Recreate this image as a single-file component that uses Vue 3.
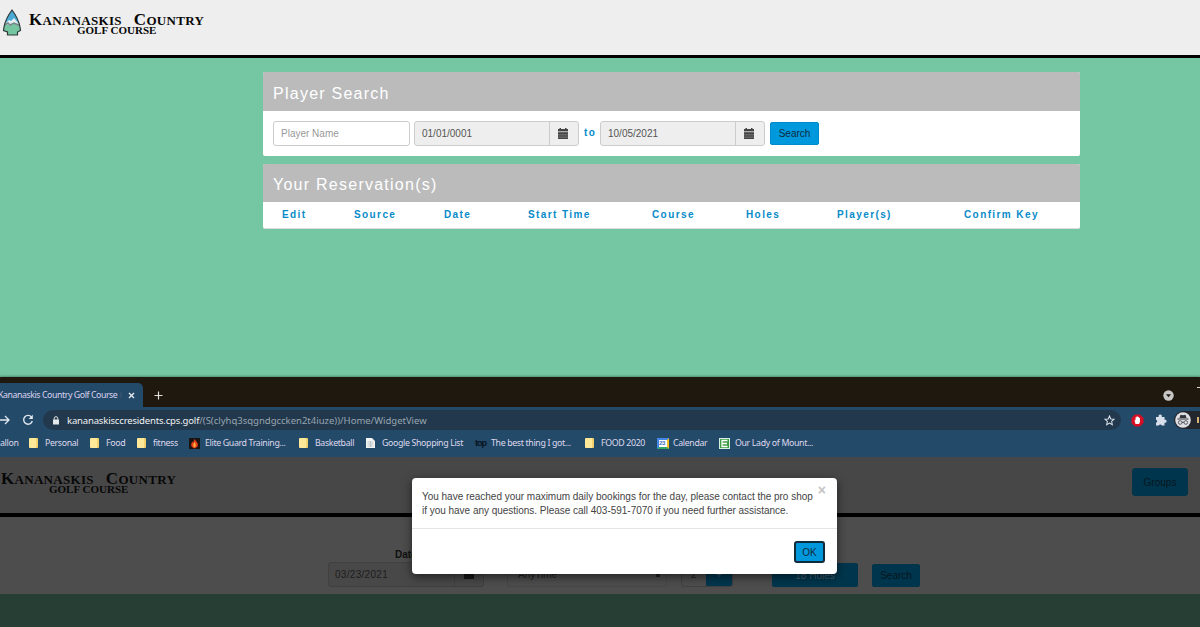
<template>
  <div class="screen">
    <section class="site">
      <header class="site-header">
        <svg class="arrowhead" width="20" height="28" viewBox="0 0 20 28">
          <path d="M10 1C13 5 16.500 10 18 18L18.500 21.500L15.500 23V26H5.500V23L1.500 21.500L2 18C3.500 10 7 5 10 1Z" fill="#74c5a0" />
          <path d="M10 1C7 5 4.500 9 3 15L7 12L9 13L12 10L17 15C15.500 9 13 5 10 1Z" fill="#49aad5" />
          <path d="M3 15L7 11L9 12L12 9L17 15L11 14L8 16Z" fill="#e5eff2" />
          <path d="M2.500 16L6 14L8 16L12 14L17.500 16.500" fill="none" stroke="#79878b" stroke-width="1.500" />
          <path d="M10 1C13 5 16.500 10 18 18L18.500 21.500L15.500 23V26H5.500V23L1.500 21.500L2 18C3.500 10 7 5 10 1Z" fill="none" stroke="#303a3b" stroke-width="1.200" />
        </svg>
        <div class="brand">
          <div class="brand-name"><b>K</b>ANANASKIS<b class="second">C</b>OUNTRY</div>
          <div class="brand-sub">GOLF COURSE</div>
        </div>
      </header>

      <main class="content">
        <div class="panel search-panel">
          <h2>Player Search</h2>
          <div class="panel-body">
            <input v-model="playerName" class="control" placeholder="Player Name" />
            <div v-for="(date, i) in dates" :key="date" class="date-wrap">
              <span v-if="i" class="to">to</span>
              <div class="date-group">
                <span class="date">{{ date }}</span>
                <span class="addon">
                  <svg width="10" height="11" viewBox="0 0 10 11">
                    <path d="M0 1H1.500V0H3V1H7V0H8.500V1H10V3H0Z" fill="#444" />
                    <path d="M0 3.500H10V11H0Z" fill="#666" />
                    <path d="M0 5.500H10M0 8H10M0 10.500H10" stroke="#444" />
                  </svg>
                </span>
              </div>
            </div>
            <button class="btn search-btn">Search</button>
          </div>
        </div>
        <div class="panel reservations">
          <h2>Your Reservation(s)</h2>
          <div class="table-head">
            <span v-for="col in columns" :key="col">{{ col }}</span>
          </div>
        </div>
      </main>
    </section>

    <section class="browser">
      <div class="tabs">
        <div class="tab">
          <span class="tab-title">Kananaskis Country Golf Course</span>
          <i class="tab-rest"></i>
          <svg width="7" height="7" viewBox="0 0 7 7"><path d="M1 1L6 6M6 1L1 6" stroke="#e8edf2" stroke-width="1.300" /></svg>
        </div>
        <svg class="new-tab" width="9" height="9" viewBox="0 0 9 9"><path d="M4.500 .5V8.500M.5 4.500H8.500" stroke="#e1dfdc" stroke-width="1.200" /></svg>
        <svg class="tab-search" width="11" height="11" viewBox="0 0 11 11"><circle cx="5.500" cy="5.500" r="5.200" fill="#c9c7c5" /><path d="M3 4.200H8L5.500 7.200Z" fill="#1f1910" /></svg>
        <i class="minimize"></i>
      </div>

      <div class="toolbar">
        <svg class="forward" width="10" height="10" viewBox="0 0 10 10"><path d="M0 5H9M5 1L9 5L5 9" fill="none" stroke="#dfe8ef" stroke-width="1.300" /></svg>
        <svg class="reload" width="12" height="12" viewBox="0 0 12 12"><path d="M9.500 3A4.400 4.400 0 1 0 10.300 7" fill="none" stroke="#dfe8ef" stroke-width="1.400" /><path d="M10.800 .8V5H6.600Z" fill="#dfe8ef" /></svg>
        <div class="address">
          <svg width="8" height="9" viewBox="0 0 8 9"><path d="M2.200 4V2.500A1.800 1.800 0 0 1 5.800 2.500V4" fill="none" stroke="#e4e8eb" stroke-width="1" /><rect x="1" y="3.500" width="6" height="5" rx=".6" fill="#e4e8eb" /></svg>
          <span class="host">kananaskisccresidents.cps.golf</span>
          <span class="path">/(S(clyhq3sqgndgccken2t4iuze))/Home/WidgetView</span>
          <svg class="star" width="11" height="11" viewBox="0 0 12 12"><path d="M6 1L7.400 4.300L11 4.600L8.300 7L9.100 10.600L6 8.700L2.900 10.600L3.700 7L1 4.600L4.600 4.300Z" fill="none" stroke="#dbe2e9" stroke-width="1.100" /></svg>
        </div>
        <svg class="adblock" width="13" height="13" viewBox="0 0 13 13"><path d="M4 .5H9L12.500 4V9L9 12.500H4L.5 9V4Z" fill="#d80f22" /><path d="M4.500 10L3.500 6.500L4.500 6V3.500Q5.200 3 5.500 3.500V2.500Q6.200 2 6.700 2.500V3Q7.500 2.500 8 3.300V4Q9 3.500 9 4.800V8L8 10Z" fill="#fff" /></svg>
        <svg class="puzzle" width="12" height="12" viewBox="0 0 12 12"><path d="M1 3H3.700A1.700 1.700 0 1 1 6.700 3H9.500V5.700A1.600 1.600 0 1 1 9.500 8.700V11.500H6.800A1.600 1.600 0 0 0 3.800 11.500H1V8.800A1.600 1.600 0 0 0 1 5.700Z" fill="#d9dfea" /></svg>
        <div class="incognito">
          <svg width="16" height="16" viewBox="0 0 16 16"><circle cx="8" cy="8" r="7.800" fill="#e0dfe3" /><path d="M4.500 6L5.500 2.800Q8 3.700 10.500 2.800L11.500 6Z" fill="#30343b" /><path d="M2.500 7H13.500M7 10.500Q8 9.500 9 10.500" fill="none" stroke="#30343b" /><circle cx="5.200" cy="10.500" r="1.800" fill="none" stroke="#555b64" /><circle cx="10.800" cy="10.500" r="1.800" fill="none" stroke="#555b64" /></svg>
          <i class="profile-text"></i>
        </div>
      </div>

      <nav class="bookmarks">
        <a v-for="mark in bookmarks" :key="mark.label">
          <span v-if="mark.icon" class="mark-icon" :class="mark.icon">
            <template v-if="mark.icon === 'top'">top</template>
            <template v-if="mark.icon === 'calendar'">23</template>
            <svg v-if="mark.icon === 'fire'" width="11" height="11" viewBox="0 0 11 11"><path d="M5.500 1Q7 3 8.500 5Q10 9 5.500 10.500Q1 9 2.500 5L4 3.500V5Z" fill="#e6401d" /><path d="M5.500 4Q8 8 5.500 9.500Q3 8 5.500 4Z" fill="#ffb338" /></svg>
            <svg v-if="mark.icon === 'sheet'" width="9" height="10" viewBox="0 0 9 10"><path d="M0 0H6L9 3V10H0Z" fill="#f4f4f2" /><path d="M1.500 4H7.500M1.500 6H7.500M1.500 8H7.500M4.500 3V9" stroke="#a5b0b7" stroke-width=".6" /></svg>
            <svg v-if="mark.icon === 'school'" width="11" height="11" viewBox="0 0 11 11"><rect width="11" height="11" fill="#d5efe0" /><rect x="1" y="1" width="9" height="9" fill="#3d9c42" /><path d="M8.500 2.500H3V8.500H8.500M3 5.500H8" fill="none" stroke="#fff" stroke-width="1.300" /></svg>
          </span>
          <span class="mark-label">{{ mark.label }}</span>
        </a>
      </nav>

      <div class="booking-page">
        <header class="booking-header">
          <div class="brand">
            <div class="brand-name"><b>K</b>ANANASKIS<b class="second">C</b>OUNTRY</div>
            <div class="brand-sub">GOLF COURSE</div>
          </div>
          <button class="dim-btn groups">Groups</button>
        </header>
        <div class="booking-form">
          <label class="date-field">
            <span class="field-label">Date</span>
            <span class="dim-control"><span>03/23/2021</span><i class="dim-addon"><b></b></i></span>
          </label>
          <span class="dim-control time">AnyTime<i class="caret"></i></span>
          <span class="dim-control players"><span>2</span><i class="stepper">+</i></span>
          <button class="dim-btn holes">18 Holes</button>
          <button class="dim-btn dim-search">Search</button>
        </div>

        <div v-if="modalOpen" class="modal">
          <div class="modal-body">
            <p>You have reached your maximum daily bookings for the day, please contact the pro shop<br />if you have any questions. Please call 403-591-7070 if you need further assistance.</p>
            <button class="close" @click="modalOpen = false">×</button>
          </div>
          <div class="modal-footer">
            <button class="btn ok" @click="modalOpen = false">OK</button>
          </div>
        </div>
      </div>
    </section>
  </div>
</template>

<script setup>
import { ref } from 'vue'

const playerName = ref('')
const modalOpen = ref(true)
const dates = ['01/01/0001', '10/05/2021']
const columns = ['Edit', 'Source', 'Date', 'Start Time', 'Course', 'Holes', 'Player(s)', 'Confirm Key']
const bookmarks = [
  { label: 'allon' },
  { label: 'Personal', icon: 'folder' },
  { label: 'Food', icon: 'folder' },
  { label: 'fitness', icon: 'folder' },
  { label: 'Elite Guard Training...', icon: 'fire' },
  { label: 'Basketball', icon: 'folder' },
  { label: 'Google Shopping List', icon: 'sheet' },
  { label: 'The best thing I got...', icon: 'top' },
  { label: 'FOOD 2020', icon: 'folder' },
  { label: 'Calendar', icon: 'calendar' },
  { label: 'Our Lady of Mount...', icon: 'school' }
]
</script>

<style>
body {
  margin: 0;
  overflow: hidden;
}
</style>

<style scoped>
* { box-sizing: border-box; }
svg { display: block; flex: none; }
button { font-family: inherit; padding: 0; }
.screen {
  width: 1200px;
  height: 627px;
  overflow: hidden;
  background: #74c7a2;
  font-family: "Liberation Sans", Arial, sans-serif;
  font-size: 10px;
}
.site { height: 377px; }
.site-header {
  height: 58px;
  display: flex;
  background: #eee;
  border-bottom: 3px solid #000;
  padding: 9px 0 0 3px;
}
.arrowhead { margin-left: -1px; }
.brand {
  width: 180px;
  font-family: "Liberation Serif", serif;
  font-weight: bold;
  color: #080808;
}
.site-header .brand { margin: 2px 0 0 7px; }
.brand-name {
  height: 14px;
  font-size: 13px;
  line-height: 17px;
  letter-spacing: 0.3px;
  white-space: nowrap;
}
.brand-name b { font-size: 17px; }
.brand-name .second { margin-left: 12px; }
.brand-sub {
  font-size: 11px;
  line-height: 10px;
  padding-left: 48px;
  white-space: nowrap;
}
.content {
  width: 817px;
  margin-left: 263px;
  padding-top: 14px;
}
.panel {
  background: #fff;
  border-radius: 2px;
  overflow: hidden;
}
.search-panel { height: 84px; margin-bottom: 8px; }
.reservations { height: 65px; border-bottom: 1px solid #ddd; }
.panel h2 {
  height: 38px;
  margin: 0;
  padding: 2px 10px 0;
  line-height: 38px;
  background: #bbb;
  color: #fff;
  font-size: 16px;
  font-weight: normal;
  letter-spacing: 1.25px;
}
.search-panel h2 { height: 39px; padding-top: 3px; }
.panel-body {
  display: flex;
  padding: 10px;
}
.control {
  width: 137px;
  height: 25px;
  margin-right: 4px;
  border: 1px solid #ccc;
  border-radius: 3px;
  padding: 0 7px;
  font: 10px "Liberation Sans", sans-serif;
}
.control::placeholder { color: #999; }
.date-wrap { display: flex; }
.date-group {
  width: 165px;
  height: 25px;
  display: flex;
  border: 1px solid #ccc;
  border-radius: 3px;
  background: #eee;
  line-height: 24px;
  color: #555;
}
.date { flex: 1; padding-left: 7px; }
.addon {
  width: 29px;
  border-left: 1px solid #ccc;
  padding: 6px 0 0 8px;
}
.to {
  width: 21px;
  padding-left: 5px;
  line-height: 24px;
  color: #088bca;
  font-weight: bold;
  letter-spacing: 1.3px;
}
.btn {
  background: #0098dc;
  border: 1px solid #008bca;
  border-radius: 2px;
  color: #102b3c;
  font-size: 10px;
}
.search-btn { width: 49px; height: 23px; margin: 1px 0 0 5px; }
.table-head {
  display: grid;
  grid-template-columns: 72px 90px 84px 124px 94px 91px 127px 1fr;
  padding-left: 19px;
  line-height: 26px;
  color: #088bc9;
  font-weight: bold;
  letter-spacing: 1.4px;
}

.browser {
  height: 250px;
  font-family: "Noto Sans", sans-serif;
}
.tabs {
  height: 30px;
  display: flex;
  align-items: center;
  padding-top: 6px;
  background: #1f180f;
  box-shadow: 0 -1px 2px rgba(0, 0, 0, 0.3);
}
.tab {
  width: 143px;
  height: 24px;
  display: flex;
  align-items: center;
  background: #244a6a;
  border-radius: 0 5px 0 0;
  color: #d9d1ed;
}
.tab-title {
  width: 119px;
  font-size: 8.8px;
  letter-spacing: -0.44px;
  margin-left: -2px;
  white-space: nowrap;
}
.tab-rest { width: 2px; height: 6px; margin: 0 6px 0 3px; background: #31506b; }
.new-tab { margin-left: 11px; }
.tab-search { margin-left: auto; }
.minimize { width: 3px; height: 1px; margin: -16px 0 0 23px; background: #ddd; }
.toolbar {
  height: 26px;
  display: flex;
  align-items: center;
  background: #244a6a;
}
.reload { margin-left: 12px; }
.address {
  width: 1080px;
  height: 20px;
  display: flex;
  align-items: center;
  margin-left: 9px;
  padding: 0 6px 0 9px;
  border-radius: 10px;
  background: #22384c;
  font-size: 9.5px;
}
.host { margin-left: 7px; color: #f1f2f3; white-space: nowrap; letter-spacing: -0.16px; }
.path { color: #98a5b0; white-space: nowrap; letter-spacing: 0; }
.star { margin-left: auto; }
.adblock { margin-left: 10px; }
.puzzle { margin-left: 11px; }
.incognito {
  width: 26px;
  height: 18px;
  display: flex;
  align-items: center;
  margin-left: 7px;
  padding-left: 1px;
  background: #23272d;
  border-radius: 9px 0 0 9px;
}
.profile-text { width: 2px; height: 6px; margin-left: 6px; background: #d4b478; }
.bookmarks {
  height: 24px;
  display: grid;
  grid-template-columns: 29px 61px 47px 52px 110px 67px 109px 110px 72px 62px 1fr;
  background: #244a6a;
  color: #dfd9ec;
  font-size: 8.8px;
  letter-spacing: -0.35px;
}
.bookmarks a { display: flex; align-items: center; height: 20px; white-space: nowrap; }
.mark-icon { width: 16px; flex: none; }
.folder::before {
  content: "";
  display: block;
  width: 9px;
  height: 10px;
  background: linear-gradient(90deg, #ffe898 75%, #f4d36f 75%);
  border-radius: 1px;
}
.fire svg { background: #191411; }
.top { font: bold 9px "Liberation Sans", sans-serif; color: #07131c; letter-spacing: -1px; }
.calendar {
  width: 12px;
  height: 11px;
  margin-right: 4px;
  border: 2px solid #4387e8;
  border-right-color: #f5bd25;
  border-bottom-color: #31a466;
  background: #fff;
  color: #3770c3;
  font: bold 6px/7px "Liberation Sans", sans-serif;
}

.booking-page {
  position: relative;
  height: 170px;
  background: #263e33;
  font-family: "Liberation Sans", Arial, sans-serif;
}
.booking-header {
  height: 60px;
  display: flex;
  justify-content: space-between;
  padding: 12px 12px 0 1px;
  background: #474747;
  border-top: 1px solid #44484c;
  border-bottom: 4px solid #000;
}
.dim-btn {
  height: 23px;
  border: 1px solid #00344b;
  border-radius: 2px;
  background: #00364d;
  color: #07151d;
  font-size: 10px;
}
.groups { width: 56px; height: 28px; margin-top: -2px; border-radius: 3px; }
.booking-form {
  height: 77px;
  display: flex;
  align-items: flex-end;
  padding: 0 0 7px 328px;
  background: #4d4d4d;
}
.date-field { width: 156px; }
.field-label { display: block; padding-left: 67px; color: #101010; font-weight: bold; line-height: 15px; }
.dim-control {
  height: 25px;
  display: flex;
  justify-content: space-between;
  padding-left: 6px;
  border: 1px solid #404040;
  border-radius: 3px;
  line-height: 24px;
  color: #1d1d1d;
}
.date-field .dim-control { background: #484848; letter-spacing: 0.3px; }
.dim-addon { width: 29px; border-left: 1px solid #404040; padding: 6px 0 0 9px; }
.dim-addon b { display: block; width: 10px; height: 10px; background: #171717; }
.time { width: 160px; margin-left: 23px; padding-left: 10px; border-color: #464646; }
.caret { width: 4px; height: 4px; margin: 10px 6px; background: #222; }
.players { width: 52px; margin-left: 14px; padding-left: 9px; }
.stepper { width: 26px; background: #00364d; border-radius: 0 2px 2px 0; text-align: center; font-style: normal; color: #47606e; }
.holes { width: 86px; margin: 0 14px 0 39px; height: 24px; color: #47606e; }
.dim-search { width: 48px; }
.modal {
  position: absolute;
  left: 412px;
  top: 21px;
  width: 425px;
  height: 96px;
  background: #fff;
  border-radius: 4px;
  box-shadow: 0 3px 10px rgba(0, 0, 0, 0.55);
  color: #444;
}
.modal-body {
  height: 51px;
  display: flex;
  justify-content: space-between;
  padding: 12px 11px 0 10px;
  border-bottom: 1px solid #e4e4e4;
}
.modal-body p { margin: 0; line-height: 14px; white-space: nowrap; letter-spacing: -0.02px; }
.close { height: 12px; margin-top: -7px; border: 0; background: none; color: #c4c4c4; font: bold 14px/15px "Liberation Sans", sans-serif; }
.modal-footer { display: flex; justify-content: flex-end; padding: 12px 12px; }
.ok { width: 31px; height: 22px; border: 2px solid #102b3a; border-radius: 3px; }
</style>
